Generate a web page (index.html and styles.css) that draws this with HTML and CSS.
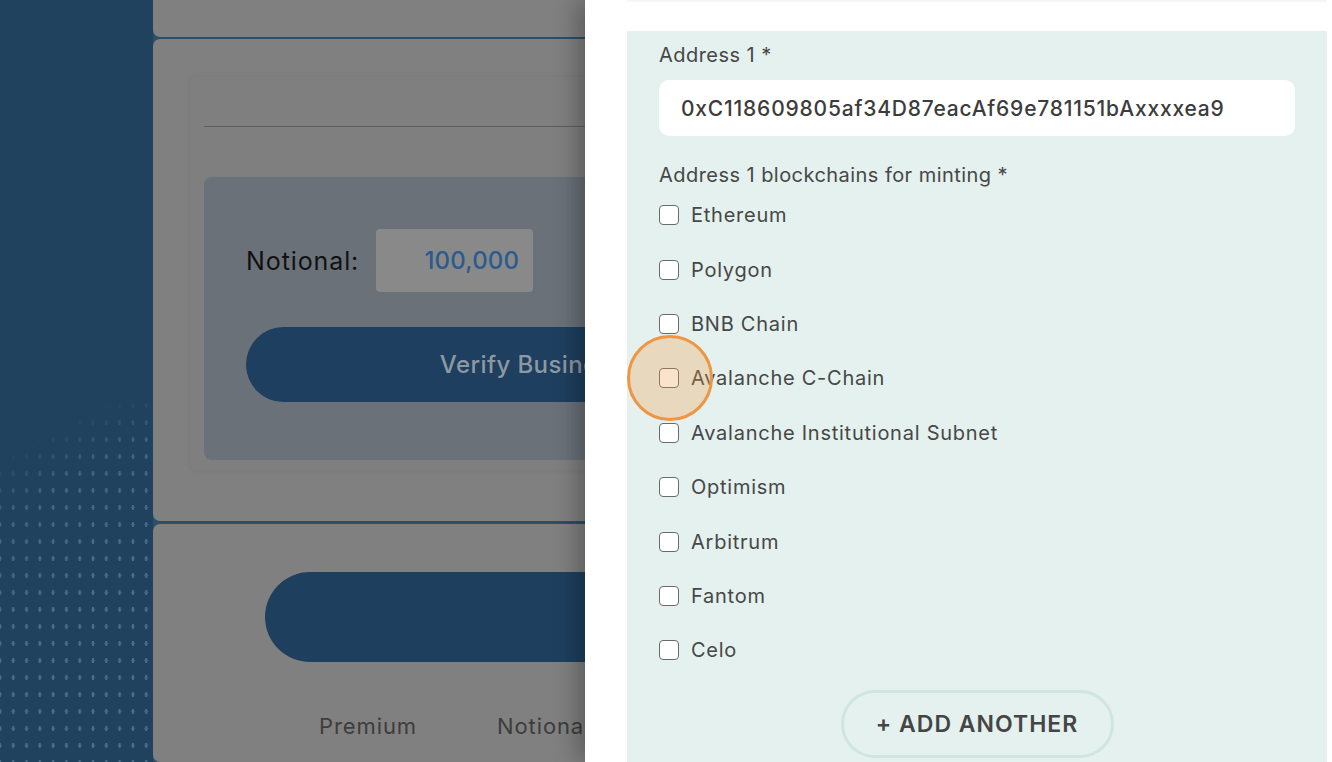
FILE: index.html
```html
<!DOCTYPE html>
<html lang="en">
<head>
<meta charset="utf-8">
<title>Mint addresses</title>
<link rel="stylesheet" href="styles.css">
</head>
<body>
<div class="app">
  <aside class="sidebar"></aside>
  <main class="main">
    <section class="card card-top"></section>
    <section class="card card-calc">
      <div class="panel">
        <hr class="rule">
        <div class="quote-box">
          <div class="notional-row">
            <span class="notional-label">Notional:</span>
            <div class="num-input">100,000</div>
          </div>
          <button class="verify" type="button">Verify Business</button>
        </div>
      </div>
    </section>
    <section class="card card-bottom">
      <div class="big-btn"></div>
      <div class="stats">
        <span>Premium</span>
        <span>Notional</span>
      </div>
    </section>
  </main>
</div>

<aside class="drawer">
  <div class="drawer-top"></div>
  <div class="address-block">
    <label class="field-label" for="addr1">Address 1 *</label>
    <div class="text-input" id="addr1">0xC118609805af34D87eacAf69e781151bAxxxxea9</div>
    <div class="field-label chains-label">Address 1 blockchains for minting *</div>
    <ul class="chain-list">
      <li class="chain"><span class="box"></span><span>Ethereum</span></li>
      <li class="chain"><span class="box"></span><span>Polygon</span></li>
      <li class="chain"><span class="box"></span><span>BNB Chain</span></li>
      <li class="chain chain-focus"><span class="box"></span><span>Avalanche C-Chain</span><span class="cursor-ring"></span></li>
      <li class="chain"><span class="box"></span><span>Avalanche Institutional Subnet</span></li>
      <li class="chain"><span class="box"></span><span>Optimism</span></li>
      <li class="chain"><span class="box"></span><span>Arbitrum</span></li>
      <li class="chain"><span class="box"></span><span>Fantom</span></li>
      <li class="chain"><span class="box"></span><span>Celo</span></li>
    </ul>
    <div class="add-row">
      <button class="add-btn" type="button">+ ADD ANOTHER</button>
    </div>
  </div>
</aside>
</body>
</html>
```

FILE: styles.css
```css
* { box-sizing: border-box; }

html, body {
  margin: 0;
  padding: 0;
  width: 1332px;
  height: 762px;
  overflow: hidden;
  font-family: "Inter", "Liberation Sans", sans-serif;
}

.app {
  display: flex;
  height: 762px;
  background: #2c4e67;
}

.sidebar {
  position: relative;
  width: 153px;
  flex: none;
  background: #20425f;
  overflow: hidden;
}

.sidebar::after {
  content: "";
  position: absolute;
  left: -20px;
  top: 380px;
  width: 200px;
  height: 400px;
  background-image: radial-gradient(ellipse 1.6px 2.6px at 50% 50%, rgba(110, 150, 185, 0.75) 85%, transparent 100%);
  background-size: 13.3px 17px;
  -webkit-mask-image: radial-gradient(circle at 320px 520px, #000 0, #000 380px, rgba(0,0,0,0.8) 480px, transparent 534px);
  mask-image: radial-gradient(circle at 320px 520px, #000 0, #000 380px, rgba(0,0,0,0.8) 480px, transparent 534px);
  opacity: 0.7;
}

.main {
  flex: 1;
  display: flex;
  flex-direction: column;
  gap: 2px;
  margin-top: -10px;
}

.card {
  background: #808080;
  border-radius: 7px;
}

.card-top {
  height: 47px;
}

.card-calc {
  height: 482px;
  padding: 38px 0 0 37px;
  margin-bottom: 1px;
}

.panel {
  width: 560px;
  height: 393px;
  background: #7f7f7f;
  border-radius: 6px;
  box-shadow: 0 0 6px rgba(0, 0, 0, 0.08);
  padding: 49px 0 0 14px;
}

.rule {
  margin: 0;
  border: 0;
  border-top: 1px solid #5d5d5d;
  height: 0;
}

.quote-box {
  margin-top: 50px;
  height: 283px;
  background: #6a7179;
  border-radius: 8px 0 0 8px;
  padding: 52px 0 0 42px;
}

.notional-row {
  display: flex;
  align-items: center;
  gap: 17px;
  height: 63px;
}

.notional-label {
  font-size: 25px;
  color: #111;
  letter-spacing: 0.9px;
}

.num-input {
  width: 157px;
  height: 63px;
  background: #898989;
  border-radius: 4px;
  display: flex;
  align-items: center;
  justify-content: flex-end;
  padding-right: 14px;
  font-size: 24px;
  font-weight: 500;
  color: #2b5b8c;
  letter-spacing: 0.2px;
}

.verify {
  display: block;
  margin-top: 35px;
  width: 560px;
  height: 75px;
  border: 0;
  border-radius: 38px;
  background: #1e3f5f;
  color: #8d98a2;
  font-family: inherit;
  font-size: 24px;
  font-weight: 500;
  letter-spacing: 0.4px;
  padding: 0 0 0 12px;
}

.card-bottom {
  flex: 1;
  padding: 48px 0 0 112px;
}

.big-btn {
  width: 700px;
  height: 90px;
  border-radius: 45px;
  background: linear-gradient(90deg, #1e3f5e 0%, #1e3f5e 60%, #1f3e5a 100%);
}

.stats {
  display: flex;
  gap: 80px;
  margin-top: 51px;
  padding-left: 54px;
  font-size: 22px;
  letter-spacing: 0.9px;
  color: #3d3d3d;
}

/* drawer */
.drawer {
  position: fixed;
  top: 0;
  right: 0;
  width: 747px;
  height: 762px;
  background: #ffffff;
  box-shadow: -8px 0 22px rgba(0, 0, 0, 0.28);
  padding: 0 5px 0 42px;
  display: flex;
  flex-direction: column;
}

.drawer-top {
  height: 31px;
  flex: none;
  border-top: 2px solid #f6f6f6;
}

.address-block {
  flex: 1;
  background: #e4f1ee;
  padding: 12px 32px 0 32px;
  color: #474747;
}

.field-label {
  display: block;
  font-size: 20px;
  line-height: 24px;
  letter-spacing: 0.45px;
  color: #474747;
}

.text-input {
  margin-top: 13px;
  height: 56px;
  background: #ffffff;
  border-radius: 10px;
  display: flex;
  align-items: center;
  padding-left: 22px;
  font-size: 21px;
  font-weight: 500;
  letter-spacing: 0.8px;
  color: #3c3c3c;
}

.chains-label {
  margin-top: 27px;
}

.chain-list {
  list-style: none;
  margin: 1px 0 0;
  padding: 0;
}

.chain {
  position: relative;
  height: 54.4px;
  display: flex;
  align-items: center;
  gap: 12px;
  font-size: 20px;
  letter-spacing: 0.75px;
  color: #474747;
}

.box {
  width: 20px;
  height: 20px;
  flex: none;
  border: 1.6px solid #6b6b6b;
  border-radius: 4px;
  background: #ffffff;
}

.cursor-ring {
  position: absolute;
  left: -32px;
  top: 50%;
  width: 86px;
  height: 86px;
  margin-top: -43px;
  border-radius: 50%;
  border: 3.5px solid #ef9645;
  background: rgba(240, 150, 70, 0.28);
  pointer-events: none;
}

.add-row {
  display: flex;
  justify-content: center;
  margin-top: 12px;
}

.add-btn {
  width: 273px;
  height: 68px;
  border: 3px solid #cfe6e0;
  border-radius: 34px;
  background: transparent;
  font-family: inherit;
  font-size: 23px;
  font-weight: 600;
  color: #454545;
  letter-spacing: 1px;
}
```
